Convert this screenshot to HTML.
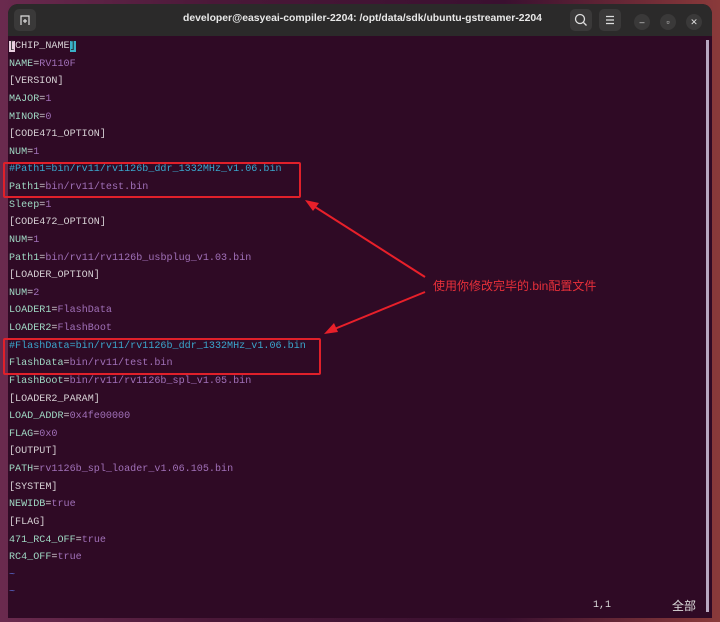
<!DOCTYPE html>
<html><head><meta charset="utf-8"><style>
body{margin:0;width:720px;height:622px;overflow:hidden;background:linear-gradient(90deg,#6a2a4e,#4a1838 30%,#3a1030 70%,#8a3a3a);position:relative;font-family:"Liberation Sans",sans-serif}
.win{position:absolute;left:8px;top:4px;width:704px;height:614px;background:#2f0a25;border-radius:10px 10px 0 0;overflow:hidden}
.tb{position:absolute;left:0;top:0;width:704px;height:32px;background:#2b2a2a}
.title{position:absolute;left:175px;top:9px;font-weight:bold;font-size:10.4px;color:#e8e8e8;white-space:nowrap}
.btn{position:absolute;background:#3a3939;border-radius:5px}
.cb{position:absolute;top:10px;width:16px;height:16px;border-radius:50%;background:#3a3939;color:#ddd;font-size:9px;text-align:center;line-height:16px}
.term{position:absolute;left:1px;top:34px;font-family:"Liberation Mono",monospace;font-size:10.1px;line-height:17.62px;color:#d6d0d4;white-space:pre}
.k{color:#9fd8c3}.v{color:#a070b8}.c{color:#3aa6cc}
.box{position:absolute;border:2px solid #e0202a;border-radius:2px}
.sb{position:absolute;left:698px;top:36px;width:3px;height:572px;background:#b8a8c0}
</style></head><body>
<div class="win">
<div class="tb">
 <div class="btn" style="left:6px;top:5px;width:22px;height:22px"><svg width="22" height="22"><path d="M7 16V7h8v9M9 12h4M11 10v4" stroke="#ddd" stroke-width="1.2" fill="none"/></svg></div>
 <div class="title">developer@easyeai-compiler-2204: /opt/data/sdk/ubuntu-gstreamer-2204</div>
 <div class="btn" style="left:562px;top:5px;width:22px;height:22px"><svg width="22" height="22"><circle cx="10" cy="10" r="4.5" stroke="#ddd" stroke-width="1.3" fill="none"/><path d="M13.5 13.5l3 3" stroke="#ddd" stroke-width="1.3"/></svg></div>
 <div class="btn" style="left:591px;top:5px;width:22px;height:22px"><svg width="22" height="22"><path d="M7 7.5h8M7 11h8M7 14.5h8" stroke="#ddd" stroke-width="1.2"/></svg></div>
 <div class="cb" style="left:626px">–</div>
 <div class="cb" style="left:652px">▫</div>
 <div class="cb" style="left:678px">✕</div>
</div>
<div class="term"><span style="background:#e9cfe0;color:#333">[</span>CHIP_NAME<span style="background:#3ab0c8;color:#222">]</span>
<span class="k">NAME</span>=<span class="v">RV110F</span>
[VERSION]
<span class="k">MAJOR</span>=<span class="v">1</span>
<span class="k">MINOR</span>=<span class="v">0</span>
[CODE471_OPTION]
<span class="k">NUM</span>=<span class="v">1</span>
<span class="c">#Path1=bin/rv11/rv1126b_ddr_1332MHz_v1.06.bin</span>
<span class="k">Path1</span>=<span class="v">bin/rv11/test.bin</span>
<span class="k">Sleep</span>=<span class="v">1</span>
[CODE472_OPTION]
<span class="k">NUM</span>=<span class="v">1</span>
<span class="k">Path1</span>=<span class="v">bin/rv11/rv1126b_usbplug_v1.03.bin</span>
[LOADER_OPTION]
<span class="k">NUM</span>=<span class="v">2</span>
<span class="k">LOADER1</span>=<span class="v">FlashData</span>
<span class="k">LOADER2</span>=<span class="v">FlashBoot</span>
<span class="c">#FlashData=bin/rv11/rv1126b_ddr_1332MHz_v1.06.bin</span>
<span class="k">FlashData</span>=<span class="v">bin/rv11/test.bin</span>
<span class="k">FlashBoot</span>=<span class="v">bin/rv11/rv1126b_spl_v1.05.bin</span>
[LOADER2_PARAM]
<span class="k">LOAD_ADDR</span>=<span class="v">0x4fe00000</span>
<span class="k">FLAG</span>=<span class="v">0x0</span>
[OUTPUT]
<span class="k">PATH</span>=<span class="v">rv1126b_spl_loader_v1.06.105.bin</span>
[SYSTEM]
<span class="k">NEWIDB</span>=<span class="v">true</span>
[FLAG]
<span class="k">471_RC4_OFF</span>=<span class="v">true</span>
<span class="k">RC4_OFF</span>=<span class="v">true</span>
<span style="color:#5a6ad0">~</span>
<span style="color:#5a6ad0">~</span></div>
<div style="position:absolute;left:585px;top:596px;font-family:'Liberation Mono',monospace;font-size:10px;color:#ddd">1,1</div>
<div style="position:absolute;left:664px;top:593px;font-family:'Liberation Sans','Noto Sans CJK SC',sans-serif;font-size:12px;color:#ddd">全部</div>
<div class="sb"></div>
</div>
<div class="box" style="left:3px;top:162px;width:294px;height:32px"></div>
<div class="box" style="left:3px;top:338px;width:314px;height:33px"></div>
<svg style="position:absolute;left:0;top:0" width="720" height="622">
<path d="M425 277L312 205" stroke="#e8202a" stroke-width="2"/>
<path d="M305 200l14 3-6 8z" fill="#e8202a"/>
<path d="M425 292L332 330" stroke="#e8202a" stroke-width="2"/>
<path d="M324 334l10-11 4 9z" fill="#e8202a"/>
</svg>
<div style="position:absolute;left:433px;top:277px;font-family:'Liberation Sans','Noto Sans CJK SC',sans-serif;font-size:12px;color:#e8303a">使用你修改完毕的.bin配置文件</div>
</body></html>
